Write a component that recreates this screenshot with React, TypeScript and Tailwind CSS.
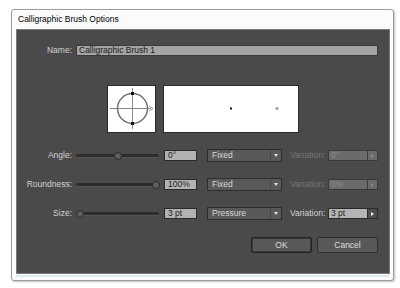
const font = { fontFamily: '"Liberation Sans", Arial, sans-serif' }

function Slider({ pos }: { pos: number }) {
  // pos: thumb centre in px from the track's left edge
  return (
    <div className="relative h-[11px] w-[83px]">
      <div className="absolute left-0 right-0 top-[4px] h-[3px] rounded-full bg-[#2c2c2c] shadow-[0_1px_0_#575757]" />
      <div
        className="absolute top-[1.5px] h-[8px] w-[8px] rounded-full border border-[#2a2a2a] bg-[#5e5e5e]"
        style={{ left: pos - 4 }}
      />
    </div>
  )
}

function Field({ value, disabled }: { value: string; disabled?: boolean }) {
  return (
    <div
      className={
        disabled
          ? 'flex h-[11px] w-[40px] items-center border border-[#3a3a3a] bg-[#6b6b6b] pl-[2px] text-[8.5px] text-[#8c8c8c]'
          : 'flex h-[11px] w-[40px] items-center border border-[#2a2a2a] bg-[#b4b4b4] pl-[2px] text-[8.5px] text-[#1e1e1e]'
      }
    >
      {value}
    </div>
  )
}

function Select({ value }: { value: string }) {
  return (
    <div className="flex h-[13px] w-[75px] items-center border border-[#2d2d2d] bg-[#595959] text-[8.5px] text-[#d6d6d6]">
      <span className="flex-1 pl-[4px]">{value}</span>
      <span className="h-full w-px bg-[#474747]" />
      <span className="flex w-[10px] items-center justify-center">
        <span className="h-0 w-0 border-x-[2.5px] border-t-[3px] border-x-transparent border-t-[#e0e0e0]" />
      </span>
    </div>
  )
}

function Row({
  label,
  pos,
  value,
  mode,
  variation,
  active,
}: {
  label: string
  pos: number
  value: string
  mode: string
  variation: string
  active?: boolean
}) {
  return (
    <div className="flex h-[11px] items-center">
      <div className="w-[57px] pr-[2px] text-right text-[8.5px] text-[#d2d2d2]">{label}</div>
      <div className="ml-[2px]">
        <Slider pos={pos} />
      </div>
      <div className="ml-[5px] flex h-[11px] w-[33px] items-center border border-[#2a2a2a] bg-[#b2b2b2] pl-[3px] text-[8.5px] text-[#1e1e1e]">
        {value}
      </div>
      <div className="ml-[10px]">
        <Select value={mode} />
      </div>
      <div className={active ? 'ml-[8px] w-[38px] text-[8.5px] text-[#d2d2d2]' : 'ml-[8px] w-[38px] text-[8.5px] text-[#777777]'}>
        Variation:
      </div>
      <Field value={variation} disabled={!active} />
      <div
        className={
          active
            ? 'flex h-[11px] w-[10px] items-center justify-center border border-l-0 border-[#2a2a2a] bg-[#4e4e4e]'
            : 'flex h-[11px] w-[10px] items-center justify-center border border-l-0 border-[#3a3a3a] bg-[#6b6b6b]'
        }
      >
        <span
          className={
            active
              ? 'h-0 w-0 border-y-[2.5px] border-l-[3px] border-y-transparent border-l-[#f0f0f0]'
              : 'h-0 w-0 border-y-[2.5px] border-l-[3px] border-y-transparent border-l-[#8a8a8a]'
          }
        />
      </div>
    </div>
  )
}

export default function App() {
  return (
    <div className="h-[288px] w-[400px] bg-white pl-[11px] pt-[9px]" style={font}>
      <div className="flex h-[272px] w-[383px] flex-col rounded-[3px] border border-[#9c9c9c] bg-[#fbfbfb] shadow-[1px_1px_2px_rgba(0,0,0,0.25)]">
        <div className="flex h-[19px] items-center pl-[6px] text-[8.5px] text-black">Calligraphic Brush Options</div>
        <div className="ml-[4px] mr-[3px] flex h-[245px] flex-col border border-[#7a7a7a] bg-[#4a4a4a] pt-[15px]">
          {/* name */}
          <div className="flex h-[11px] items-center">
            <div className="w-[57px] pr-[2px] text-right text-[8.5px] text-[#d2d2d2]">Name:</div>
            <div className="ml-[2px] flex h-[11px] w-[302px] items-center border border-[#3a3a3a] bg-[#a4a4a4] pl-[2px] text-[8.5px] text-[#1a1a1a]">
              Calligraphic Brush 1
            </div>
          </div>

          {/* preview */}
          <div className="mt-[29px] flex h-[48px] pl-[90px]">
            <div className="h-[48px] w-[49px] border border-[#2a2a2a] bg-white">
              <svg width="47" height="46" viewBox="0 0 47 46">
                <line x1="2" y1="22.5" x2="43" y2="22.5" stroke="#8a8a8a" strokeWidth="1" />
                <line x1="24.5" y1="2" x2="24.5" y2="43" stroke="#8a8a8a" strokeWidth="1" />
                <path d="M41 20 L45 22.5 L41 25" fill="none" stroke="#9a9a9a" strokeWidth="1" />
                <circle cx="24.5" cy="22.5" r="15" fill="none" stroke="#6e6e6e" strokeWidth="1.4" />
                <rect x="23" y="6" width="3" height="3" fill="#111" />
                <rect x="23" y="36" width="3" height="3" fill="#111" />
              </svg>
            </div>
            <div className="ml-[7px] h-[48px] w-[136px] border border-[#2a2a2a] bg-white">
              <svg width="134" height="46" viewBox="0 0 134 46">
                <rect x="66" y="21.5" width="2" height="2" fill="#111" />
                <circle cx="113" cy="22.5" r="1.6" fill="#a0a0a0" />
              </svg>
            </div>
          </div>

          <div className="mt-[17px] flex flex-col gap-[18px]">
            <Row label="Angle:" pos={42} value="0°" mode="Fixed" variation="0°" />
            <Row label="Roundness:" pos={80} value="100%" mode="Fixed" variation="0%" />
            <Row label="Size:" pos={4} value="3 pt" mode="Pressure" variation="3 pt" active />
          </div>

          <div className="mt-[18px] flex justify-end gap-[5px] pr-[11px]">
            <button
              type="button"
              className="h-[16px] w-[61px] rounded-[2px] border border-[#222] bg-[#585858] text-[8.5px] text-[#dedede] shadow-[inset_0_0_0_1px_#3a3a3a]"
            >
              OK
            </button>
            <button
              type="button"
              className="h-[16px] w-[61px] rounded-[2px] border border-[#2e2e2e] bg-[#585858] text-[8.5px] text-[#dedede]"
            >
              Cancel
            </button>
          </div>
        </div>
        <div className="mx-[4px] mt-[1px] h-[2px] bg-[#d9efef]" />
      </div>
    </div>
  )
}
